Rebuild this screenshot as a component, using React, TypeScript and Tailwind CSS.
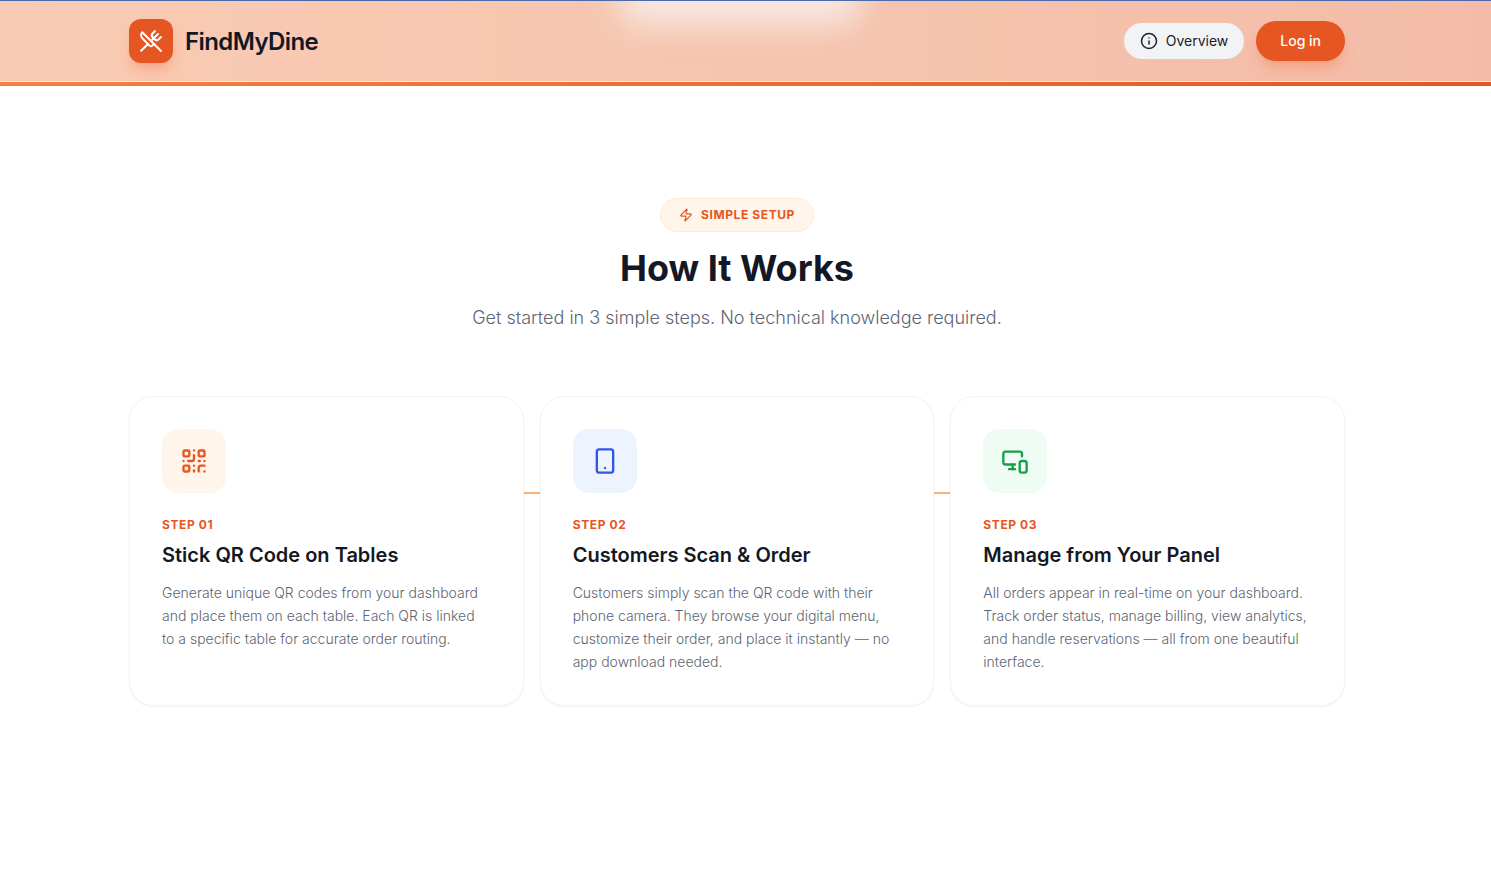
import { Fragment, type ReactNode } from "react";
import { Info, MonitorSmartphone, QrCode, Smartphone, UtensilsCrossed, Zap } from "lucide-react";

type Step = {
  label: string;
  title: string;
  text: string;
  icon: ReactNode;
  tile: string;
};

const steps: Step[] = [
  {
    label: "STEP 01",
    title: "Stick QR Code on Tables",
    text: "Generate unique QR codes from your dashboard and place them on each table. Each QR is linked to a specific table for accurate order routing.",
    icon: <QrCode size={28} aria-hidden="true" />,
    tile: "bg-[#fff5ea] text-[#e65622]",
  },
  {
    label: "STEP 02",
    title: "Customers Scan & Order",
    text: "Customers simply scan the QR code with their phone camera. They browse your digital menu, customize their order, and place it instantly — no app download needed.",
    icon: <Smartphone size={28} aria-hidden="true" />,
    tile: "bg-[#edf3ff] text-[#3355e6]",
  },
  {
    label: "STEP 03",
    title: "Manage from Your Panel",
    text: "All orders appear in real-time on your dashboard. Track order status, manage billing, view analytics, and handle reservations — all from one beautiful interface.",
    icon: <MonitorSmartphone size={28} aria-hidden="true" />,
    tile: "bg-[#eefcf3] text-[#169f4b]",
  },
];

function Header() {
  return (
    <header className="relative overflow-hidden border-t border-[#4a6ba8] bg-gradient-to-r from-[#facbb4] via-[#f6c5af] to-[#f4bca8]">
      <div
        aria-hidden="true"
        className="absolute -top-16 left-1/2 h-[88px] w-60 -translate-x-[126px] rounded-2xl bg-[#f7e8e2] blur-[16px]"
      />
      <div className="relative pr-[17px]">
        <div className="mx-auto flex h-20 max-w-7xl items-center justify-between px-8">
          <a href="#top" className="flex items-center gap-3">
            <span className="flex size-11 items-center justify-center rounded-xl bg-[#e65622] text-white shadow-lg shadow-[#f26b35]/30">
              <UtensilsCrossed size={24} strokeWidth={2} aria-hidden="true" />
            </span>
            <span className="pt-0.5 text-2xl font-semibold tracking-tight text-[#131825]">FindMyDine</span>
          </a>
          <nav className="flex items-center gap-3">
            <a
              href="#overview"
              className="flex h-9 items-center gap-2 rounded-full bg-[#f1f3f4] px-4 text-sm text-[#1b2030]"
            >
              <Info size={18} aria-hidden="true" />
              Overview
            </a>
            <button
              type="button"
              className="h-10 rounded-full bg-[#e65622] px-6 text-sm font-medium text-white shadow-lg shadow-[#f26b35]/30"
            >
              Log in
            </button>
          </nav>
        </div>
      </div>
      <div className="relative h-[5px] border-t border-[#fbe9e3] bg-gradient-to-r from-[#f67f45] to-[#e65622]" />
    </header>
  );
}

function StepCard({ step }: { step: Step }) {
  return (
    <li className="flex-1 rounded-3xl border border-[#f3f4f6] bg-white p-8 shadow-[0_1px_2px_rgba(0,0,0,0.05)]">
      <div className={`mb-6 flex size-16 items-center justify-center rounded-2xl ${step.tile}`}>{step.icon}</div>
      <p className="mb-2 text-xs font-bold tracking-wider text-[#e65622]">{step.label}</p>
      <h3 className="mb-3 text-xl leading-7 font-semibold text-[#131825]">{step.title}</h3>
      <p className="text-sm leading-[23px] font-light text-[#5d6573]">{step.text}</p>
    </li>
  );
}

export default function App() {
  return (
    <div id="top" className="min-h-screen bg-white font-[Inter,sans-serif]">
      <Header />
      <main className="pr-[17px]">
        <section className="mx-auto max-w-7xl px-8 py-28">
          <div className="mb-16 flex flex-col items-center text-center">
            <p className="mb-3 flex items-center gap-2 rounded-full border border-[#ffebcf] bg-[#fff5ea] px-[18px] py-2 text-xs font-bold tracking-wider text-[#e65622]">
              <Zap size={14} aria-hidden="true" />
              SIMPLE SETUP
            </p>
            <h2 className="mb-3 text-4xl leading-12 font-bold text-[#131825]">How It Works</h2>
            <p className="text-lg leading-7 font-light text-[#5d6573]">
              Get started in 3 simple steps. No technical knowledge required.
            </p>
          </div>
          <ol className="flex">
            {steps.map((step, index) => (
              <Fragment key={step.label}>
                {index > 0 && <li aria-hidden="true" className="mt-24 h-0.5 w-4 shrink-0 bg-[#fdb072]" />}
                <StepCard step={step} />
              </Fragment>
            ))}
          </ol>
        </section>
      </main>
    </div>
  );
}
